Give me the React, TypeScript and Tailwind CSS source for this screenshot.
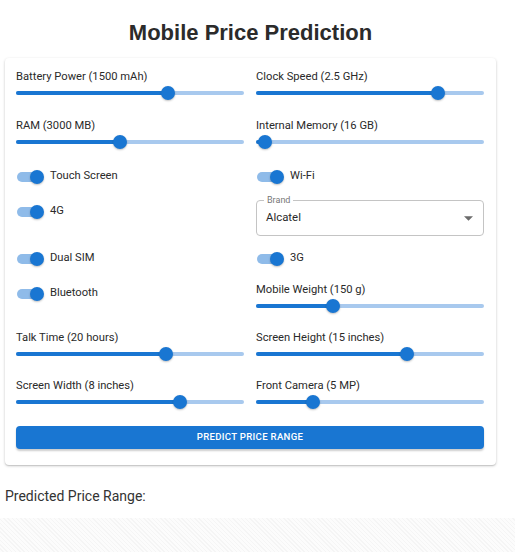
import React from 'react';

interface SliderProps {
  label: string;
  pct: number;
}

// MUI-like slider: label above, thin track with round thumb
const SliderField: React.FC<SliderProps> = ({ label, pct }) => (
  <div className="flex flex-col h-9">
    <div className="h-5 leading-5 pt-[2px] text-[11.2px] text-[#2a2a2a]">{label}</div>
    <div className="relative h-4">
      <div className="absolute left-0 right-0 top-[6px] h-[4px] rounded-full bg-[#a8c9ee]" />
      <div
        className="absolute left-0 top-[6px] h-[4px] rounded-full bg-[#1976d2]"
        style={{ width: `${pct}%` }}
      />
      <div
        className="absolute top-[1px] w-[14px] h-[14px] -ml-[7px] rounded-full bg-[#1976d2] shadow-[0_1px_2px_rgba(0,0,0,0.25)]"
        style={{ left: `${pct}%` }}
      />
    </div>
  </div>
);

const Toggle: React.FC<{ label: string }> = ({ label }) => (
  <div className="flex items-center h-5 pt-px">
    <div className="relative w-[27px] h-[14px] ml-[1px]">
      <div className="absolute left-0 top-[2px] w-[25px] h-[10px] rounded-full bg-[#8fbbe9]" />
      <div className="absolute right-0 top-0 w-[14px] h-[14px] rounded-full bg-[#1976d2] shadow-[0_1px_2px_rgba(0,0,0,0.25)]" />
    </div>
    <span className="ml-[6px] text-[11.2px] text-[#2a2a2a]">{label}</span>
  </div>
);

const BrandSelect: React.FC = () => (
  <div className="relative h-9 rounded-[4px] border border-[#c4c4c4]">
    <span className="absolute -top-[7px] left-[7px] px-[3px] bg-white text-[9px] leading-3 text-[#777]">
      Brand
    </span>
    <div className="flex items-center justify-between h-full pl-[9px] pr-[10px]">
      <span className="text-[11.4px] text-[#2a2a2a]">Alcatel</span>
      <svg width="9" height="5" viewBox="0 0 10 5">
        <path d="M0 0 L5 5 L10 0 Z" fill="#6b6b6b" />
      </svg>
    </div>
  </div>
);

export default function App() {
  return (
    <div
      className="w-[515px] h-[552px] bg-[#f8f8f8] bg-[repeating-linear-gradient(45deg,#f5f5f5_0_1px,#fcfcfc_1px_3px)]"
      style={{ fontFamily: 'Roboto, "Liberation Sans", sans-serif' }}
    >
      <div className="mt-[10px] h-[508px] bg-white pt-[1px]">
        <div className="w-[501px]">
          <h1
            className="mt-[9px] h-[26px] leading-[26px] text-center text-[22px] font-bold text-[#2b2b2b]"
            style={{ fontFamily: '"Liberation Sans", Arial, sans-serif' }}
          >
            Mobile Price Prediction
          </h1>

          <div className="ml-[5px] mt-[12px] w-[491px] rounded-[4px] bg-white shadow-[0_1px_3px_rgba(0,0,0,0.2),0_1px_1px_rgba(0,0,0,0.1)] pt-[7px] pb-4 pl-[11px] pr-[12px]">
            <div className="grid grid-cols-2 gap-x-3">
              <SliderField label="Battery Power (1500 mAh)" pct={66.7} />
              <SliderField label="Clock Speed (2.5 GHz)" pct={80} />
            </div>
            <div className="grid grid-cols-2 gap-x-3 mt-[13px]">
              <SliderField label="RAM (3000 MB)" pct={45.6} />
              <SliderField label="Internal Memory (16 GB)" pct={4} />
            </div>
            <div className="grid grid-cols-2 gap-x-3 mt-4">
              <Toggle label="Touch Screen" />
              <Toggle label="Wi-Fi" />
            </div>
            <div className="grid grid-cols-2 gap-x-3 mt-[14px]">
              <div className="pt-px">
                <Toggle label="4G" />
              </div>
              <BrandSelect />
            </div>
            <div className="grid grid-cols-2 gap-x-3 mt-3">
              <Toggle label="Dual SIM" />
              <Toggle label="3G" />
            </div>
            <div className="grid grid-cols-2 gap-x-3 mt-[10px]">
              <div className="pt-[5px]">
                <Toggle label="Bluetooth" />
              </div>
              <SliderField label="Mobile Weight (150 g)" pct={33.8} />
            </div>
            <div className="grid grid-cols-2 gap-x-3 mt-3">
              <SliderField label="Talk Time (20 hours)" pct={65.8} />
              <SliderField label="Screen Height (15 inches)" pct={66.2} />
            </div>
            <div className="grid grid-cols-2 gap-x-3 mt-3">
              <SliderField label="Screen Width (8 inches)" pct={71.9} />
              <SliderField label="Front Camera (5 MP)" pct={25} />
            </div>
            <button className="mt-4 w-full h-[23px] rounded-[4px] bg-[#1976d2] text-white text-[9.6px] font-medium tracking-[0.3px] uppercase shadow-[0_2px_2px_rgba(0,0,0,0.2)]">
              Predict Price Range
            </button>
          </div>

          <div className="mt-[21px] ml-[5px] text-[14px] leading-5 text-[#333]">
            Predicted Price Range:
          </div>
        </div>
      </div>
    </div>
  );
}
